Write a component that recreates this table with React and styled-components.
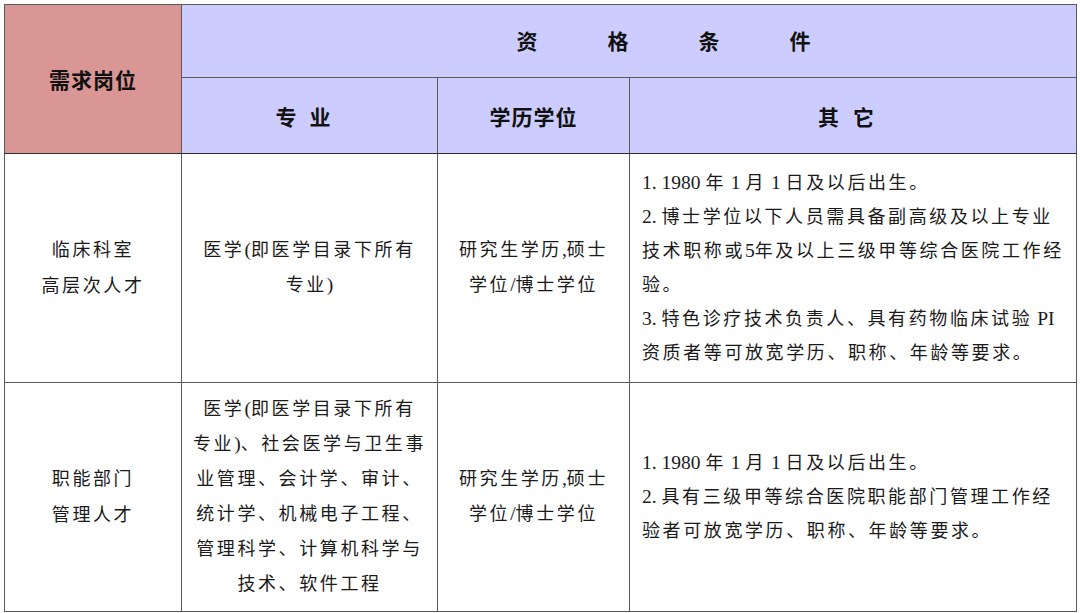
import styled, { createGlobalStyle } from "styled-components";

const GlobalStyle = createGlobalStyle`
  html, body {
    margin: 0;
    padding: 0;
    background: #ffffff;
  }
`;

const Page = styled.div`
  padding: 4px;
  width: 1080px;
  box-sizing: border-box;
`;

const Table = styled.table`
  width: 1072px;
  border-collapse: collapse;
  table-layout: fixed;
  border-left: 1px solid #3a3a3a;
  border-right: 1px solid #3a3a3a;
  border-top: 1px solid #9a9a9a;
  border-bottom: 1px solid #a8a8a8;
`;

const HeadCell = styled.th`
  background: ${p => (p.$tone === "red" ? "#d99694" : "#ccccff")};
  border: 1px solid #5a5a5a;
  border-bottom-color: ${p => (p.$dark ? "#2e2e2e" : "#5a5a5a")};
  height: ${p => p.$h}px;
  padding: 0;
  font-family: "Noto Sans CJK SC", "Liberation Sans", sans-serif;
  font-weight: 700;
  font-size: 21px;
  color: #111;
  letter-spacing: ${p => p.$spacing || 1}px;
  text-align: center;
  vertical-align: middle;
`;

const SpreadTitle = styled.div`
  display: flex;
  justify-content: center;
  gap: 69px;
  padding-left: 70px;
  padding-bottom: 2px;
`;

const Cell = styled.td`
  border: 1px solid #5a5a5a;
  border-top-color: ${p => (p.$dark ? "#2e2e2e" : "#5a5a5a")};
  height: ${p => p.$h}px;
  padding: ${p => (p.$left ? "0 8px 5px 12px" : "0 6px 5px")};
  font-family: "Noto Sans CJK SC", "Liberation Serif", sans-serif;
  font-size: 18px;
  letter-spacing: 2.6px;
  color: #1a1a1a;
  text-align: ${p => (p.$left ? "left" : "center")};
  vertical-align: middle;
  white-space: nowrap;
`;

const Line = styled.div`
  height: ${p => p.$lh || 34}px;
  line-height: ${p => p.$lh || 34}px;
`;

const Latin = styled.span`
  font-family: "Liberation Serif", serif;
  font-size: 19.5px;
  line-height: 1;
  letter-spacing: 0;
`;

const rows = [
  {
    post: ["临床科室", "高层次人才"],
    major: ["医学(即医学目录下所有", "专业)"],
    degree: ["研究生学历,硕士", "学位/博士学位"],
    other: [
      "1. 1980 年 1 月 1 日及以后出生。",
      "2. 博士学位以下人员需具备副高级及以上专业",
      "技术职称或5年及以上三级甲等综合医院工作经",
      "验。",
      "3. 特色诊疗技术负责人、具有药物临床试验 PI",
      "资质者等可放宽学历、职称、年龄等要求。",
    ],
  },
  {
    post: ["职能部门", "管理人才"],
    major: [
      "医学(即医学目录下所有",
      "专业)、社会医学与卫生事",
      "业管理、会计学、审计、",
      "统计学、机械电子工程、",
      "管理科学、计算机科学与",
      "技术、软件工程",
    ],
    degree: ["研究生学历,硕士", "学位/博士学位"],
    other: [
      "1. 1980 年 1 月 1 日及以后出生。",
      "2. 具有三级甲等综合医院职能部门管理工作经",
      "验者可放宽学历、职称、年龄等要求。",
    ],
  },
];

// ascii runs (digits, brackets, PI) get the serif face without the CJK tracking
function mixed(text) {
  return text.split(/([\x20-\x7e]+)/).map((part, i) =>
    i % 2 ? <Latin key={i}>{part}</Latin> : part
  );
}

function Lines({ items, lh }) {
  return items.map((text, i) => (
    <Line key={i} $lh={lh}>
      {mixed(text)}
    </Line>
  ));
}

export default function App() {
  return (
    <>
      <GlobalStyle />
      <Page>
        <Table>
          <colgroup>
            <col style={{ width: 177 }} />
            <col style={{ width: 256 }} />
            <col style={{ width: 192 }} />
            <col style={{ width: 447 }} />
          </colgroup>
          <thead>
            <tr>
              <HeadCell rowSpan={2} $tone="red" $dark $h={72}>
                需求岗位
              </HeadCell>
              <HeadCell colSpan={3} $h={72}>
                <SpreadTitle>
                  <span>资</span>
                  <span>格</span>
                  <span>条</span>
                  <span>件</span>
                </SpreadTitle>
              </HeadCell>
            </tr>
            <tr>
              <HeadCell $dark $h={75} $spacing={13}>
                专业
              </HeadCell>
              <HeadCell $dark $h={75}>
                学历学位
              </HeadCell>
              <HeadCell $dark $h={75} $spacing={14}>
                其它
              </HeadCell>
            </tr>
          </thead>
          <tbody>
            {rows.map((row, i) => (
              <tr key={i}>
                <Cell $dark={i === 0} $h={223}>
                  <Lines items={row.post} lh={36} />
                </Cell>
                <Cell $dark={i === 0} $h={223}>
                  <Lines items={row.major} lh={35} />
                </Cell>
                <Cell $dark={i === 0} $h={223}>
                  <Lines items={row.degree} lh={35} />
                </Cell>
                <Cell $dark={i === 0} $h={223} $left>
                  <Lines items={row.other} lh={34} />
                </Cell>
              </tr>
            ))}
          </tbody>
        </Table>
      </Page>
    </>
  );
}
